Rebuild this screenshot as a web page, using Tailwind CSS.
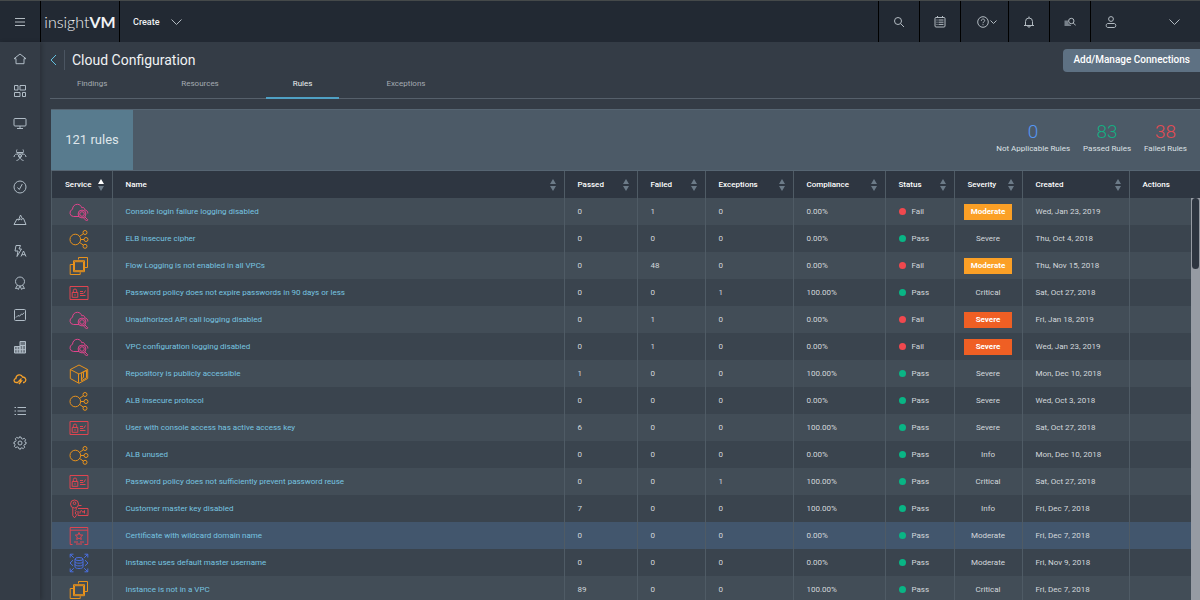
<!DOCTYPE html>
<html lang="en">
<head>
<meta charset="utf-8">
<title>insightVM - Cloud Configuration</title>
<script src="https://cdn.jsdelivr.net/npm/@tailwindcss/browser@4"></script>
</head>
<body class="h-screen overflow-hidden bg-[#343c46] font-['Roboto','Liberation_Sans',sans-serif] text-[8px] leading-3 text-[#d3d8dc] flex flex-col">

<!-- Icon library -->
<svg class="hidden" aria-hidden="true">
  <symbol id="cloud" viewBox="0 0 20 20"><path d="M10 14.5H4.6A3.7 3.7 0 0 1 3.5 7.3C3.6 4 6 2.2 8.500 2.300C10.800 2.400 12.200 3.800 12.800 5.800C14.300 5 15.800 6 15.800 7.800C17.800 8.200 19 9.600 18.800 11.500"/><circle cx="13" cy="12" r="3.900"/><circle cx="13" cy="12" r="2.300"/><path d="m15.800 14.800 3 3-1.200 1.200-3-3"/></symbol>
  <symbol id="elb" viewBox="0 0 20 20"><circle cx="6.300" cy="10.500" r="5.300"/><circle cx="16" cy="3.500" r="2"/><circle cx="17" cy="10.500" r="2"/><circle cx="16" cy="17.300" r="2"/><path d="m10.700 7.300 3.700-2.600M11.600 10.500H15M10.700 13.500l3.700 2.600"/></symbol>
  <symbol id="ec2" viewBox="0 0 20 20"><path d="M5.500 5.700h9v9h-9zM9.500 3.500V1.500h9v10h-2.500M4 8.500H1.200v10h10v-2.300"/><path d="M4.500 4.700h11v11h-11z"/></symbol>
  <symbol id="iam" viewBox="0 0 20 20"><path d="M1 3.500h18v13H1zM3.200 9.500h5.600v4.800H3.200zM4.300 9.500V7.700a1.700 1.700 0 0 1 3.400 0v1.800M6 11.200v1.500M11 8.500h3M11 10.500h3.500M11 12.500h5.500M15 10l1.500-2.500"/></symbol>
  <symbol id="s3" viewBox="0 0 20 20"><path d="m10 1 8.700 4.500v9L10 19.300 1.300 14.500v-9zM1.300 5.500 10 10l8.700-4.500M9.500 10v8.800M17.500 6.500l-5 2.800v7.500l5-3zM14.500 8.500v5l-2 1.300"/></symbol>
  <symbol id="kms" viewBox="0 0 20 20"><circle cx="5.500" cy="5" r="4"/><circle cx="5.500" cy="4.200" r="1.300"/><path d="M3.800 8.800v8l1.700 2 1.700-2v-1.500L6 14l1.200-1.300-1-1 1-1V8.800M9.500 6.500h3M9 9.500h10v7H9V12M11 14.500v-2l1.500-1 1.500 2 1.500-2v3M17 15h.5"/></symbol>
  <symbol id="cert" viewBox="0 0 20 20"><path d="M3.500 18.500H1.200v-17h17.600v17h-3.300M1.200 4.200h17.600M10 6.500l1 2.400 2.700.2-2 1.800.6 2.600L10 12.100l-2.300 1.400.6-2.600-2-1.800 2.700-.2zM5 16h4M11 16h4M7 18h6"/></symbol>
  <symbol id="rds" viewBox="0 0 20 20"><ellipse cx="10" cy="6" rx="4" ry="1.500"/><path d="M6 6v8c0 2 8 2 8 0V6M6 8.700c0 2 8 2 8 0M6 11.400c0 2 8 2 8 0M1.200 4.500V1.200h3.300M1.200 1.200l3.600 3.600M15.500 1.200h3.300v3.300M18.800 1.200l-3.600 3.600M1.200 15.500v3.300h3.300M1.200 18.800l3.600-3.600M18.800 15.500v3.300h-3.300M18.800 18.800l-3.600-3.600M4 7.200 1 10l3 2.800M16 7.200l3 2.800-3 2.800"/></symbol>
</svg>

<header class="h-[42px] shrink-0 flex border-t border-[#45494a] bg-[#222933] text-[#b2bac1]">
  <button class="w-10 flex items-center justify-center" aria-label="Menu"><svg class="size-3 fill-none stroke-current" viewBox="0 0 12 12"><path d="M1 2.500h10M1 6h10M1 9.500h10"/></svg></button>
  <a href="#" class="w-20 border-x-1 border-black flex items-center justify-center font-['Lato',sans-serif] text-base leading-5 font-light text-[#f1f3f5]">insight<b class="font-bold">VM</b></a>
  <button class="pl-[13px] flex items-center gap-3 text-[9px] font-medium text-[#eef0f2]">Create
    <svg class="w-[11px] h-2 fill-none stroke-[#b2bac1]" viewBox="0 0 11 8"><path d="m.5 1.500 5 5 5-5"/></svg></button>
  <nav class="ml-auto flex" aria-label="Tools">
    <button class="w-[41px] border-l border-black flex items-center justify-center" aria-label="Search"><svg class="size-3 fill-none stroke-current" viewBox="0 0 12 12"><circle cx="5" cy="5" r="3.500"/><path d="m7.600 7.600 3.400 3.400"/></svg></button>
    <button class="w-[41px] border-l border-black flex items-center justify-center" aria-label="Lists"><svg class="size-3 fill-none stroke-current" viewBox="0 0 12 12"><rect x="1" y="1.500" width="10" height="9.500" rx="1"/><path d="M2.500 4h1M4.500 4h5M2.500 6.200h1M4.500 6.200h5M2.500 8.400h1M4.500 8.400h5M3.500 0v2M8.500 0v2"/></svg></button>
    <button class="w-[48px] border-l border-black flex items-center justify-center pl-1" aria-label="Help"><svg class="w-5 h-3 fill-none stroke-current" viewBox="0 0 20 12"><circle cx="6" cy="6" r="5.300"/><path d="M4.300 4.800C4.300 2.500 7.700 2.500 7.700 4.600 7.700 5.800 6 5.700 6 7.200M6 8.200v1M13.500 4.500l3 3 3-3"/></svg></button>
    <button class="w-[41px] border-l border-black flex items-center justify-center" aria-label="Notifications"><svg class="size-3 fill-none stroke-current" viewBox="0 0 12 12"><path d="M1 9.500h10M2.500 9.500v-4a3.500 3.500 0 0 1 7 0v4M6 2V.5M4.500 9.800c.2 1.800 2.800 1.800 3 0"/></svg></button>
    <button class="w-[41px] border-l border-black flex items-center justify-center" aria-label="Inspect data"><svg class="size-3 fill-none stroke-current" viewBox="0 0 12 12"><path class="fill-[#77808a] stroke-none" d="M.5 4.500H4c-.5 2 .5 4 3 4.500v1H.5z"/><circle cx="7.300" cy="5" r="2.700"/><path d="m9.300 7 2.500 2.500"/></svg></button>
    <button class="w-[110px] border-l border-black flex items-center justify-between pl-[14px] pr-5" aria-label="Account"><svg class="size-3 fill-none stroke-current" viewBox="0 0 12 12"><circle cx="6" cy="3" r="2.400"/><path d="M2.700 7.500h6.600c2 0 2 4 0 4H2.700c-2 0-2-4 0-4z"/></svg><svg class="w-[11px] h-2 fill-none stroke-current" viewBox="0 0 11 8"><path d="m.5 1.500 5 5 5-5"/></svg></button>
  </nav>
</header>

<div class="flex-1 min-h-0 flex">
  <nav class="w-10 shrink-0 pt-[10px] flex flex-col items-center gap-[18px] bg-[#343c46] shadow-[2px_0_4px_rgba(0,0,0,0.2)] text-[#b0bcc6]" aria-label="Main">
    <a href="#" aria-label="Home"><svg class="size-[14px] fill-none stroke-current" viewBox="0 0 14 14"><path d="M1 6.700 7 2l6 4.700M1 6.700h2v5h8v-5h2"/></svg></a>
    <a href="#" aria-label="Dashboard"><svg class="size-[14px] fill-none stroke-current" viewBox="0 0 14 14"><path d="M1.500 1.500h3.500v4.500H1.500zM7 1.500h5.500v4.500H7zM1.500 8.500H7v4H1.500zM9.500 8.500h3v4h-3z"/></svg></a>
    <a href="#" aria-label="Assets"><svg class="size-[14px] fill-none stroke-current" viewBox="0 0 14 14"><rect x="1" y="2.500" width="12" height="7.500" rx="1"/><path d="M7 10v2.500M4 12.500h6"/></svg></a>
    <a href="#" aria-label="Vulnerabilities"><svg class="size-[14px] fill-none stroke-current" viewBox="0 0 14 14"><circle cx="7" cy="8" r="1.500"/><path d="M4 1.500c-1.500 3 .5 4.500 3 4.500s4.500-1.500 3-4.500M1 9c.5-3.500 3.500-3.700 5-1 1.200 2.300.2 4-2.500 4.500M13 9c-.5-3.500-3.500-3.700-5-1-1.200 2.300-.2 4 2.500 4.500M4 4.500h6"/></svg></a>
    <a href="#" aria-label="Policies"><svg class="size-[14px] fill-none stroke-current" viewBox="0 0 14 14"><circle cx="7" cy="7" r="6"/><path d="m4.500 7.500 1.800 2 3-5.500"/></svg></a>
    <a href="#" aria-label="Goals"><svg class="size-[14px] fill-none stroke-current" viewBox="0 0 14 14"><path d="M1 12.500 4 7l1.500 1L7.500 3l2 4 1-.5 2.500 6zM5.500 8l2-1 1.500 1"/></svg></a>
    <a href="#" aria-label="Automation"><svg class="size-[14px] fill-none stroke-current" viewBox="0 0 14 14"><path d="M3 1.500h4.500L6 5h2.500L4 12.500l1-5.500H2zM8 12.500 10.500 7l2.500 5.500M9 10.700h3"/></svg></a>
    <a href="#" aria-label="Awards"><svg class="size-[14px] fill-none stroke-current" viewBox="0 0 14 14"><circle cx="7" cy="5.500" r="4.500"/><path d="M4.500 9 2.500 12.500l2-.3.800 1.300L7 10l1.700 3.500.8-1.300 2 .3L9.500 9"/></svg></a>
    <a href="#" aria-label="Reports"><svg class="size-[14px] fill-none stroke-current" viewBox="0 0 14 14"><rect x="1.500" y="1.500" width="11" height="11" rx="1"/><path d="m3 9.500 2-2 1.500.7L8.500 6l1 .5L11 4.700"/></svg></a>
    <a href="#" aria-label="Containers"><svg class="size-[14px] fill-[#6d7781] stroke-current" viewBox="0 0 14 14"><path d="M1.500 6.500H7v6.500H1.500zM7 1.500h5.500V13H7zM1.500 9.700h11M7 5.500h5.500M4.200 6.500V13M9.700 5.500V13"/></svg></a>
    <a href="#" aria-label="Cloud configuration" class="text-[#f5a12b]"><svg class="size-[14px] fill-none stroke-current stroke-[1.300]" viewBox="0 0 14 14"><path d="M5.500 10.500H3.300C.3 10.300.5 7 2.800 6.700 3 2.200 8.500 1.800 9.500 5c3.500-.3 4.500 4 1.500 5.500h-1M8.500 6.500 6 9h2.500L6 12"/></svg></a>
    <a href="#" aria-label="Management"><svg class="size-[14px] fill-none stroke-current" viewBox="0 0 14 14"><path d="M1.500 3.500h1.500M4.500 3.500h8.500M1.500 7h1.500M4.500 7h8.500M1.500 10.500h1.500M4.500 10.500h8.500"/></svg></a>
    <a href="#" aria-label="Administration"><svg class="size-[14px] fill-none stroke-current" viewBox="0 0 14 14"><circle cx="7" cy="7" r="2"/><path d="M6 1h2l.4 1.600 1.300.5 1.500-.8 1.400 1.400-.8 1.500.5 1.200L13 6v2l-1.600.5-.5 1.200.8 1.500-1.400 1.400-1.500-.8-1.200.5L8 13H6l-.5-1.600-1.300-.5-1.500.8-1.400-1.400.8-1.500-.5-1.200L1 8V6l1.600-.5.5-1.200-.8-1.500 1.400-1.400 1.500.8 1.200-.5z"/></svg></a>
  </nav>

  <main class="flex-1 min-w-0 ml-[10px] flex flex-col">
    <div class="h-[36px] shrink-0 flex items-center">
      <a href="#" class="flex w-[15px] h-5 items-center border-r border-[#4b5561]" aria-label="Back"><svg class="w-[7px] h-3 fill-none stroke-[#63c1e0]" viewBox="0 0 7 12"><path d="M6 1 1 6l5 5"/></svg></a>
      <h1 class="ml-[7px] text-sm leading-5 text-[#f0f2f4]">Cloud Configuration</h1>
      <button class="ml-auto h-[23px] px-[10px] rounded-l-sm bg-[#5e7183] text-[10px] font-medium text-white">Add/Manage Connections</button>
    </div>
    <nav class="h-[21px] shrink-0 flex gap-5 border-b border-[#56606b] text-[#a4abb2]" aria-label="Views">
      <a href="#" class="px-[27px]">Findings</a>
      <a href="#" class="px-[27px]">Resources</a>
      <a href="#" class="px-[27px] -mb-px border-b-2 border-[#4fa0c4] text-[#eceff1]" aria-current="page">Rules</a>
      <a href="#" class="px-[27px]">Exceptions</a>
    </nav>

    <section class="mt-[10px] ml-px h-[62px] shrink-0 flex border-y border-[#566572] bg-[#4c5a67]">
      <h2 class="w-[82px] flex items-center justify-center bg-[#587b8e] text-[13px] text-[#dfe6ea]">121 rules</h2>
      <div class="ml-auto pr-[13px] pt-[11px] flex gap-[13px] text-center text-[#dde1e5]">
        <div><p class="text-[19px] leading-[22px] font-light text-[#5596f2]">0</p><p>Not Applicable Rules</p></div>
        <div><p class="text-[19px] leading-[22px] font-light text-[#15ad83]">83</p><p>Passed Rules</p></div>
        <div><p class="text-[19px] leading-[22px] font-light text-[#e54b53]">38</p><p>Failed Rules</p></div>
      </div>
    </section>

    <div class="relative flex-1 min-h-0 overflow-hidden border-l border-[#4f5b65] ml-px">
      <table class="w-full table-fixed border-collapse">
        <colgroup>
          <col class="w-[60px]"><col><col class="w-[73px]"><col class="w-[68px]"><col class="w-[88px]"><col class="w-[92px]"><col class="w-[69px]"><col class="w-[68px]"><col class="w-[107px]"><col class="w-[71px]">
        </colgroup>
        <thead class="bg-[#2e3641] text-white"><tr id="heads"></tr></thead>
        <tbody id="rows"></tbody>
      </table>
      <div class="absolute right-0 top-[27px] bottom-0 w-[9px] bg-[#969ba3]"><div class="mx-px h-[71px] rounded-full bg-[#2d3540]"></div></div>
    </div>
  </main>
</div>

<script>
const columns = ['Service','Name','Passed','Failed','Exceptions','Compliance','Status','Severity','Created','Actions'];
document.getElementById('heads').innerHTML = columns.map((c, i) => `
  <th scope="col" class="h-[27px] p-0 pl-[13px] pr-2 text-left font-medium border-r border-[#4f5b65] last:border-r-0">
    <div class="flex items-center justify-between">${c}${c === 'Actions' ? '' : `<button aria-label="Sort by ${c}"><svg class="w-[6px] h-3" viewBox="0 0 6 12"><path class="${i ? 'fill-[#6c7b88]' : 'fill-white'}" d="M0 5h6L3 0z"/><path class="fill-[#6c7b88]" d="M0 7h6l-3 5z"/></svg></button>`}</div></th>`).join('');

const tint = {cloud:'stroke-[#e0458c]', elb:'stroke-[#e8921c]', ec2:'stroke-[#e8921c]', s3:'stroke-[#e8921c]', iam:'stroke-[#df4550]', kms:'stroke-[#df4550]', cert:'stroke-[#df4550]', rds:'stroke-[#4a6fe0]'};
const badge = {Moderate:'bg-[#fba026]', Severe:'bg-[#ef5f24]'};
const rules = [
  ['cloud','Console login failure logging disabled',0,1,0,'0.00%','Fail','Moderate','Wed, Jan 23, 2019'],
  ['elb','ELB insecure cipher',0,0,0,'0.00%','Pass','Severe','Thu, Oct 4, 2018'],
  ['ec2','Flow Logging is not enabled in all VPCs',0,48,0,'0.00%','Fail','Moderate','Thu, Nov 15, 2018'],
  ['iam','Password policy does not expire passwords in 90 days or less',0,0,1,'100.00%','Pass','Critical','Sat, Oct 27, 2018'],
  ['cloud','Unauthorized API call logging disabled',0,1,0,'0.00%','Fail','Severe','Fri, Jan 18, 2019'],
  ['cloud','VPC configuration logging disabled',0,1,0,'0.00%','Fail','Severe','Wed, Jan 23, 2019'],
  ['s3','Repository is publicly accessible',1,0,0,'100.00%','Pass','Severe','Mon, Dec 10, 2018'],
  ['elb','ALB insecure protocol',0,0,0,'0.00%','Pass','Severe','Wed, Oct 3, 2018'],
  ['iam','User with console access has active access key',6,0,0,'100.00%','Pass','Severe','Sat, Oct 27, 2018'],
  ['elb','ALB unused',0,0,0,'0.00%','Pass','Info','Mon, Dec 10, 2018'],
  ['iam','Password policy does not sufficiently prevent password reuse',0,0,1,'100.00%','Pass','Critical','Sat, Oct 27, 2018'],
  ['kms','Customer master key disabled',7,0,0,'100.00%','Pass','Info','Fri, Dec 7, 2018'],
  ['cert','Certificate with wildcard domain name',0,0,0,'0.00%','Pass','Moderate','Fri, Dec 7, 2018'],
  ['rds','Instance uses default master username',0,0,0,'0.00%','Pass','Moderate','Fri, Nov 9, 2018'],
  ['ec2','Instance is not in a VPC',89,0,0,'100.00%','Pass','Critical','Fri, Dec 7, 2018'],
];
const td = 'h-[27px] p-0 pl-[13px] border-r border-[#4f5b65]';
document.getElementById('rows').innerHTML = rules.map(([icon, name, passed, failed, exc, comp, status, sev, date], i) => `
  <tr class="${i === 12 ? 'bg-[#42566d]' : i % 2 ? 'bg-[#3a444e]' : 'bg-[#424d57]'}">
    <td class="h-[27px] p-0 pr-[6px] border-r border-[#4f5b65]"><svg class="mx-auto size-5 fill-none ${tint[icon]}"><use href="#${icon}"/></svg></td>
    <td class="${td}"><a href="#" class="text-[#77c4e0]">${name}</a></td>
    <td class="${td}">${passed}</td><td class="${td}">${failed}</td><td class="${td}">${exc}</td><td class="${td}">${comp}</td>
    <td class="${td}"><span class="flex items-center gap-[6px]"><i class="size-[7px] rounded-full ${status === 'Fail' ? 'bg-[#f0484e]' : 'bg-[#09b585]'}"></i>${status}</span></td>
    <td class="h-[27px] p-0 text-center border-r border-[#4f5b65]"><span class="${status === 'Fail' ? 'mx-auto block w-12 py-[2px] font-bold text-white ' + badge[sev] : ''}">${sev}</span></td>
    <td class="${td}">${date}</td><td></td>
  </tr>`).join('');
</script>
</body>
</html>
